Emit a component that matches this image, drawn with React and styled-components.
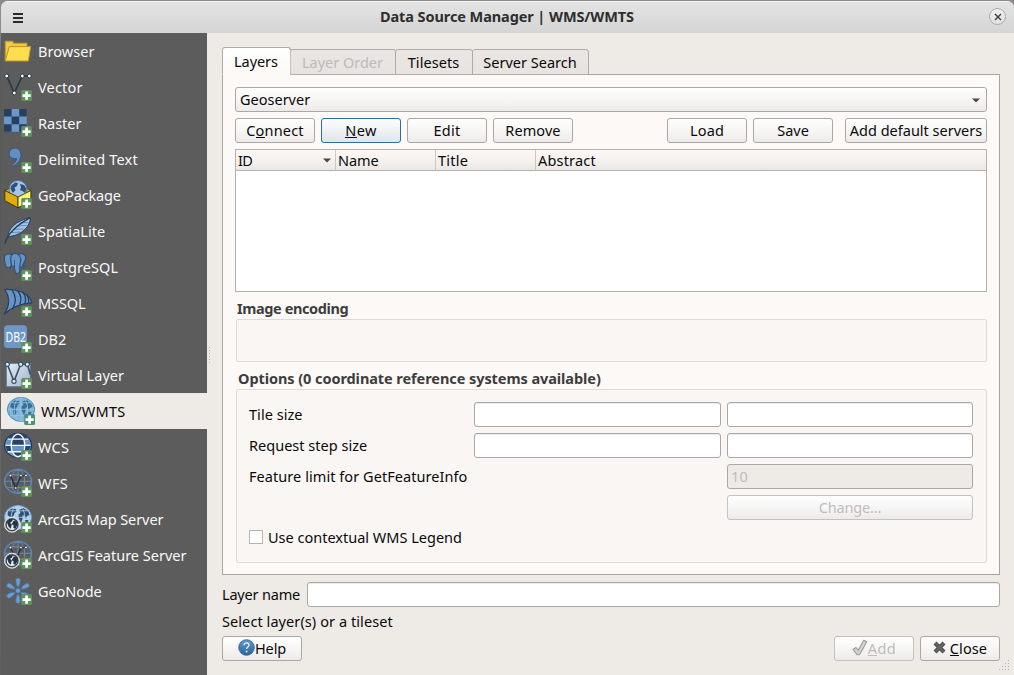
import React from 'react';
import styled, { createGlobalStyle, css } from 'styled-components';

const GlobalStyle = createGlobalStyle`
  * { box-sizing: border-box; }
  html, body { margin: 0; padding: 0; }
  body {
    font-family: "Noto Sans", "Open Sans", sans-serif;
    font-size: 14.5px;
    line-height: 20px;
    color: #0a0a0a;
    background: #6b6b6b;
    overflow: hidden;
  }
`;

const line = '#aeaba8';

const Desktop = styled.div`
  width: 1014px;
  height: 675px;
  padding: 1px 0 0 1px;
  background: linear-gradient(#8d8b8b 0 30px, #5a5a5a 60px 82px, #55595c 240px, #666 420px, #606060 675px);
`;

const Window = styled.div`
  display: flex;
  flex-direction: column;
  height: 674px;
  border-radius: 7px 7px 0 0;
  overflow: hidden;
  background: #eeebe6;
`;

const TitleBar = styled.header`
  display: grid;
  grid-template-columns: 60px 1fr 60px;
  align-items: center;
  height: 32px;
  padding-bottom: 2px;
  flex: none;
  border-top: 1px solid #f4f4f4;
  background: linear-gradient(#e3e3e3, #d5d5d5);
`;

const MenuIcon = styled.svg`
  margin: 2px 0 0 12px;
  width: 10px;
  height: 10px;
`;

const WindowTitle = styled.h1`
  margin: 0 1px 2px 0;
  text-align: center;
  font-size: 14.5px;
  font-weight: 700;
  letter-spacing: -0.09px;
  color: #2e2e2e;
`;

const WindowClose = styled.button`
  justify-self: end;
  margin-right: 8px;
  width: 17px;
  height: 17px;
  padding: 0;
  display: flex;
  align-items: center;
  justify-content: center;
  border: 1px solid #a9a9a9;
  border-radius: 50%;
  background: linear-gradient(#f0f0f0, #e2e2e2);
`;

const Body = styled.div`
  display: flex;
  flex: 1;
`;

const Sidebar = styled.nav`
  width: 206px;
  background: #5c5c5c;
`;

const SourceItem = styled.div`
  display: flex;
  align-items: center;
  gap: 6px;
  height: 36px;
  padding-left: ${(p) => (p.$active ? 6 : 3)}px;
  background: ${(p) => (p.$active ? '#eeebe6' : 'transparent')};
  color: ${(p) => (p.$active ? '#0a0a0a' : '#f8f8f8')};
`;

const SourceIcon = styled.svg`
  width: 28px;
  height: 28px;
  flex: none;
  overflow: visible;
`;

const Text = styled.span`
  letter-spacing: ${(p) => p.$track || 0}px;
  white-space: nowrap;
`;

const Splitter = styled.div`
  width: 5px;
  display: flex;
  justify-content: center;
  padding-top: 314px;
`;

const Main = styled.main`
  flex: 1;
  display: flex;
  flex-direction: column;
  padding: 14px 14px 0 10px;
`;

const TabBar = styled.div`
  display: flex;
  align-items: flex-end;
  height: 28px;
  margin-bottom: -1px;
  z-index: 1;
`;

const Tab = styled.div`
  display: flex;
  justify-content: center;
  align-items: center;
  width: ${(p) => p.$w}px;
  height: 26px;
  margin-left: -1px;
  padding-right: 1px;
  border: 1px solid ${line};
  border-radius: 3px 3px 0 0;
  background: linear-gradient(#e9e6e3, #e6e3e0);
  color: ${(p) => (p.$disabled ? '#bdbbb9' : '#0a0a0a')};
  ${(p) => p.$disabled && css`border-left-color: #c4c1be; border-right-color: #c4c1be;`}
  ${(p) => p.$active && css`
    height: 28px;
    margin-left: 0;
    border-bottom-color: #fdf9f6;
    background: linear-gradient(#ffffff, #fdf9f6);
  `}
`;

const Panel = styled.section`
  display: flex;
  flex-direction: column;
  height: 501px;
  padding: 12px 12px 0;
  border: 1px solid #a7a4a1;
  background: #fdf9f6;
`;

const controlFace = css`
  border: 1px solid #aaa7a4;
  border-radius: 3px;
  background: linear-gradient(#fefefe, #f7f6f5 50%, #ecebe9);
`;

const Combo = styled.div`
  ${controlFace}
  display: flex;
  align-items: center;
  justify-content: space-between;
  height: 25px;
  padding: 0 6px 2px 4px;

  svg { margin-top: 3px; }
`;

const ButtonRow = styled.div`
  display: flex;
  gap: 6px;
  margin-top: 6px;
`;

const Spacer = styled.div`
  flex: 1;
  margin-right: ${(p) => -(p.$pull || 0)}px;
`;

const Button = styled.button`
  ${controlFace}
  display: flex;
  align-items: center;
  justify-content: center;
  width: ${(p) => p.$w || 80}px;
  height: 25px;
  margin-left: ${(p) => p.$ml || 0}px;
  padding: 0 0 2px;
  font: inherit;
  color: ${(p) => (p.disabled ? '#bebcba' : '#0a0a0a')};
  ${(p) => p.disabled && css`border-color: #c4c1bf;`}
  ${(p) => p.$focus && css`
    border-color: #2e6e97;
    background: linear-gradient(#fbfcfd, #eff2f4 50%, #dfe5e9);
  `}
`;

const Mnemonic = styled.span`
  display: inline-block;
  height: 18px;
  border-bottom: 1px solid currentColor;
  line-height: 20px;
  vertical-align: top;
`;

const LayerTable = styled.div`
  height: 143px;
  margin-top: 6px;
  border: 1px solid #b3b0ad;
  background: #fff;
`;

const HeaderRow = styled.div`
  display: grid;
  grid-template-columns: 100px 100px 100px 1fr;
  height: 21px;
  border-bottom: 1px solid #b3b0ad;
  background: linear-gradient(#fbf7f4, #f5f2ef 50%, #eae7e4);
`;

const HeaderCell = styled.div`
  display: flex;
  align-items: center;
  justify-content: space-between;
  padding: 0 4px 0 2px;
  border-right: ${(p) => (p.$last ? 'none' : '1px solid #cac7c4')};
`;

const GroupTitle = styled.h2`
  margin: 6px 0 1px ${(p) => p.$ml}px;
  height: 20px;
  font-size: 14.5px;
  font-weight: 700;
  line-height: 20px;
  letter-spacing: ${(p) => p.$track}px;
  color: #3d3d3d;
  white-space: nowrap;
`;

const Group = styled.div`
  height: ${(p) => p.$h}px;
  margin-left: 1px;
  border: 1px solid #dedad7;
  border-radius: 2px;
  background: #faf6f3;
`;

const OptionsGrid = styled.div`
  display: grid;
  grid-template-columns: 219px 247px 246px;
  column-gap: 6px;
  row-gap: 6px;
  grid-auto-rows: 25px;
  align-items: center;
  padding: 12px 0 0 12px;

  > ${Text} { margin-bottom: 2px; }
`;

const Field = styled.div`
  display: flex;
  align-items: center;
  height: 25px;
  flex: ${(p) => (p.$grow ? 1 : 'none')};
  grid-column: ${(p) => p.$col || 'auto'};
  padding: 0 0 2px 3px;
  border: 1px solid #aaa7a4;
  border-radius: 3px;
  box-shadow: inset 0 1px 0 #ececeb;
  background: ${(p) => (p.$disabled ? '#eeebe6' : '#fff')};
  color: #bebcba;
`;

const ChangeCell = styled.div`
  grid-column: 3;
`;

const CheckRow = styled.div`
  display: flex;
  align-items: center;
  gap: 5px;
  height: 20px;
  margin: 7px 0 0 12px;
`;

const CheckBox = styled.div`
  width: 14px;
  height: 14px;
  border: 1px solid #b7b4b1;
  background: #fff;
`;

const NameRow = styled.div`
  display: flex;
  align-items: center;
  gap: 7px;
  margin-top: 7px;
`;

const NameLabel = styled.div`
  width: 78px;
  padding-bottom: 2px;
`;

const Status = styled.div`
  height: 20px;
  margin-top: 4px;
`;

const Footer = styled.footer`
  display: flex;
  gap: 6px;
  margin-top: 5px;
`;

const SizeGrip = styled.svg`
  position: absolute;
  left: 999px;
  top: 660px;
  width: 11px;
  height: 11px;
`;

const Arrow = () => (
  <svg width="8" height="5" viewBox="0 0 8 5"><path d="M0 0.5h8L4 4.5z" fill="#484644" /></svg>
);

const Plus = ({ tint = '#5b935b' }) => (
  <g>
    <rect x="17.2" y="17" width="10.8" height="11" rx="1.6" fill={tint} />
    <path d="M22.6 18.500v8.200M18.500 22.600h8.200" stroke="#fff" strokeWidth="2.700" />
  </g>
);

const LAND = 'M4 6L8 3.5 12 4 12.5 6.5 10.5 8 10 10 8.5 12 9.5 15 8 19 6.5 17 6 12 3.5 10zM15 5L19 3 24 6 25.5 10 23 11 22 14 20.5 11 18.5 10 18.5 14 17 18 15.5 15 14 12 14.5 9.5 16.5 8zM21 15L24.5 15 23.5 18 21.5 17z';

const Graticule = ({ color, width = 1 }) => (
  <g fill="none" stroke={color} strokeWidth={width}>
    <path d="M14 .8V24M1 12.3h26M3.5 5.8h21M3.5 18.6h21" />
    <ellipse cx="14" cy="12.4" rx="6.8" ry="11.6" />
  </g>
);

const MiniGlobe = () => (
  <g>
    <circle cx="8" cy="19.700" r="7.500" fill="#aeb2b6" stroke="#e6e6e6" strokeWidth="1" />
    <circle cx="8" cy="19.700" r="5.900" fill="#e9ebed" stroke="#34434f" strokeWidth="1.200" />
    <path d="M2.800 17l3-3.200 3.200.3-1 2.400-2 1.200 1.800 1.800-1 4.200-2.200-2zM9.800 15.500l3 .5.900 3.700-2.500 4.300-1.900-1.200.3-2.600-2-1z" fill="#243546" />
  </g>
);

const NodeLine = ({ stroke = '#26384b' }) => (
  <g>
    <path d="M2.700 3L10.300 20 18.300 3h7" fill="none" stroke={stroke} strokeWidth="1.700" />
    {[[2.7, 3], [10.3, 20], [18.3, 3], [25.3, 3]].map(([cx, cy]) => (
      <circle key={cx} cx={cx} cy={cy} r="1.900" fill="#fff" stroke={stroke} strokeWidth="1" />
    ))}
  </g>
);

const SmallNodes = () => (
  <g>
    <path d="M6.500 6.500L11.800 19 17 6.500h5" fill="none" stroke="#26303b" strokeWidth="1.500" />
    {[[6.5, 6.5], [11.8, 19], [17, 6.5], [22, 6.5]].map(([cx, cy]) => (
      <circle key={cx} cx={cx} cy={cy} r="1.300" fill="#fff" stroke="#26303b" strokeWidth=".7" />
    ))}
  </g>
);

const icons = {
  folder: (
    <g stroke="#b8962a" strokeWidth="1" strokeLinejoin="round">
      <path d="M1.2 24V4.200h7.600l.6 2H23v4" fill="#f3cb3f" />
      <path d="M5.300 9.600h21.400L24.400 24H1.200z" fill="#ffdc50" />
    </g>
  ),
  vector: <><NodeLine /><Plus /></>,
  raster: (
    <>
      <rect width="22.800" height="22.800" fill="#6d97c8" />
      <path d="M0 0h7.6v7.6H0zM15.2 0h7.6v7.6h-7.6zM7.6 7.6h7.6v7.6H7.6zM0 15.2h7.6v7.6H0zM15.2 15.2h7.6v7.6h-7.6z" fill="#26405f" />
      <Plus />
    </>
  ),
  comma: (
    <>
      <path d="M10 3.200C13.200 2.500 17 5 17 10c0 5-3.500 9.500-8.700 11.500l-.6-1.200c3.200-2.200 4.900-4.700 4.700-7-2 1-7.300.2-7.300-4.900C5.100 5.500 7.500 3.500 10 3.200z" fill="#5f8fc4" stroke="#33567f" strokeWidth="1" />
      <Plus />
    </>
  ),
  geopackage: (
    <>
      <path d="M.8 9.500L14 3.500l12.900 5.800L14 17z" fill="#e0b51c" stroke="#3a2f08" strokeWidth=".8" />
      <circle cx="14" cy="8.500" r="9" fill="#a7c4e4" stroke="#4b74a3" />
      <path d="M7 5l4-3.500 3 .5-1 3-2.500 1.500 1 2.500-2.500 3L6.500 8zM16 3l4 1 2.500 4-1.500 4-2.500-2-2.500-1 1-2.500z" fill="#2f4f78" />
      <path d="M.8 9.500L14 16v10.800L.8 19.700z" fill="#e0ae0c" stroke="#3a2f08" strokeWidth=".9" strokeLinejoin="round" />
      <path d="M14 16l12.900-6.500v10.200L14 26.800z" fill="#fdf870" stroke="#3a2f08" strokeWidth=".9" strokeLinejoin="round" />
      <Plus />
    </>
  ),
  feather: (
    <>
      <path d="M3.500 21C4 12 11 4 26.500.500 26 9 19 17.500 6 19.500z" fill="#a5c5e6" stroke="#27405f" strokeWidth="1" />
      <path d="M7 15.500l9-.5M9 12.500l10.500-.5M12 9l10.500-.5M15.500 6l9-.5" stroke="#5c87b7" strokeWidth="1" />
      <path d="M.8 26.500C3 19 9 10 26.300.6" fill="none" stroke="#27405f" strokeWidth="1.500" />
      <Plus />
    </>
  ),
  elephant: (
    <>
      <path d="M4 1C.5 1-.2 4 .7 8.500c.7 3.500 2 6.500 3.700 6.300 1.200-.1 2-1.300 3-1.800l3 .3c.2 3 .2 7.200 2.700 7.400 2.800.2 2.700-3 2.800-6.700 3.300.5 4.600-.4 5-1.200-2 .2-2.700-.3-2.200-1C21 8.500 22.500 4 20.500 2 18.500.3 15.500.6 14 1.300 12.500.5 9.500.5 8 1.500 7 1.100 5.500.9 4 1z" fill="#6794c7" stroke="#2f5077" strokeWidth="1.100" />
      <path d="M8 1.500C6.300 3.500 6.500 8 7.500 13M14 1.300c2.500 1.700 3.500 5 2.300 8.700-.5 1.500-.4 2.500-.2 4" fill="none" stroke="#2f5077" strokeWidth="1.200" />
      <path d="M10.500 7v6.300" stroke="#2f5077" strokeWidth=".8" />
      <Plus />
    </>
  ),
  mssql: (
    <>
      <path d="M.8.500C10 .2 25.500 2.500 27.600 13.800 17 14.500 8 18 .3 25 5.500 17 6 8 .8.500z" fill="#6794c7" stroke="#27405f" strokeWidth="1.200" strokeLinejoin="round" />
      <path d="M8 .8c4.300 6 4 12.500 1 18M13.500 1.500c4 5 4 10 2.200 14.300M18.500 3c3.200 3.500 3.700 7.500 2.500 11.200M22.500 5.500c2 2.500 2.500 5.500 2 8.500" fill="none" stroke="#27405f" strokeWidth="1.300" />
      <Plus />
    </>
  ),
  db2: (
    <>
      <rect y=".3" width="23" height="22.700" rx="3.500" fill="#6d97c8" />
      <text x="1.500" y="16.600" fontSize="13.500" fontFamily="Noto Sans, sans-serif" fill="#fff" textLength="20.600" lengthAdjust="spacingAndGlyphs">DB2</text>
      <Plus />
    </>
  ),
  virtual: (
    <>
      <defs>
        <linearGradient id="sheet" x1="0" y1="0" x2="1" y2="1">
          <stop offset="0" stopColor="#e6edf5" /><stop offset="1" stopColor="#9fb4cb" />
        </linearGradient>
      </defs>
      <rect x="2.300" y="2.300" width="24" height="23.500" fill="url(#sheet)" stroke="#5b7391" />
      <path d="M3.300 3.300L10 20.300 16.700 3.300h6.600l3 10" fill="none" stroke="#3a5068" strokeWidth="1.600" />
      {[[3.3, 3.3], [10, 20.3], [16.7, 3.3], [23.3, 3.3]].map(([cx, cy]) => (
        <circle key={cx} cx={cx} cy={cy} r="2.100" fill="#e6edf5" stroke="#3a5068" strokeWidth="1.200" />
      ))}
      <Plus />
    </>
  ),
  wms: (
    <>
      <ellipse cx="14" cy="12.400" rx="13.600" ry="12" fill="#80b4da" stroke="#4f8ab5" />
      <path d={LAND} fill="#2e648d" opacity=".9" />
      <Graticule color="#9cc8e4" width={0.8} />
      <Plus tint="#4c8f7d" />
    </>
  ),
  wcs: (
    <>
      <ellipse cx="14" cy="12.400" rx="13.500" ry="12" fill="#6794c7" stroke="#1f3856" strokeWidth="1.200" />
      <path d="M3.500 6C6 2.500 10 .8 14 .8S22 2.500 24.500 6zM7.500 6h13v6.300h-13zM1 12.300h6.500l1 6.300h-5zM20.500 12.300H27l-2.500 6.300h-5zM8.500 18.600h11L17 24h-6z" fill="#25446b" />
      <g fill="none" stroke="#f4f7fa" strokeWidth="1.400">
        <path d="M1.500 12.400h25M3.700 6.100h20.600M3.700 18.700h20.600" />
        <ellipse cx="14" cy="12.400" rx="6.800" ry="11.300" />
      </g>
      <Plus />
    </>
  ),
  wfs: (
    <>
      <ellipse cx="14" cy="12.400" rx="13.400" ry="11.800" fill="none" stroke="#5786bb" strokeWidth="1.500" />
      <Graticule color="#6f8fb3" width={0.9} />
      <SmallNodes />
      <Plus />
    </>
  ),
  arcmap: (
    <>
      <ellipse cx="14" cy="12.400" rx="13.600" ry="12" fill="#b5cfe9" stroke="#6794c7" />
      <path d={LAND} fill="#2f5077" />
      <Graticule color="#b5cfe9" width={0.8} />
      <MiniGlobe />
      <Plus />
    </>
  ),
  arcfeature: (
    <>
      <ellipse cx="14" cy="12.400" rx="13.400" ry="11.800" fill="none" stroke="#5786bb" strokeWidth="1.500" />
      <Graticule color="#6f8fb3" width={0.9} />
      <SmallNodes />
      <MiniGlobe />
      <Plus />
    </>
  ),
  geonode: (
    <>
      {[0, 60, 120, 180, 240, 300].map((a) => (
        <path key={a} transform={`rotate(${a} 14 13.700)`} d="M14 10.300C12.600 8.500 11.700 5 11.900 2.800c.2-2.200 4-2.200 4.200 0C16.300 5 15.400 8.500 14 10.300z" fill="#6d9dd1" stroke="#4a7db5" strokeWidth=".8" />
      ))}
      <circle cx="14" cy="13.700" r="2.300" fill="#6d9dd1" stroke="#4a7db5" strokeWidth=".6" />
      <Plus />
    </>
  ),
};

const sources = [
  ['Browser', 'folder', 0.06],
  ['Vector', 'vector', 0.19],
  ['Raster', 'raster', 0],
  ['Delimited Text', 'comma', 0.17],
  ['GeoPackage', 'geopackage', -0.15],
  ['SpatiaLite', 'feather', 0.03],
  ['PostgreSQL', 'elephant', 0.08],
  ['MSSQL', 'mssql', -0.1],
  ['DB2', 'db2', 0],
  ['Virtual Layer', 'virtual', 0.04],
  ['WMS/WMTS', 'wms', 0.22],
  ['WCS', 'wcs', 0.25],
  ['WFS', 'wfs', 0.4],
  ['ArcGIS Map Server', 'arcmap', -0.08],
  ['ArcGIS Feature Server', 'arcfeature', 0],
  ['GeoNode', 'geonode', -0.1],
];

const HelpIcon = () => (
  <svg width="17" height="17" viewBox="0 0 17 17">
    <defs>
      <linearGradient id="help" x1="0" y1="0" x2="0" y2="1">
        <stop offset="0" stopColor="#5e9bd0" /><stop offset="1" stopColor="#2b649a" />
      </linearGradient>
    </defs>
    <circle cx="8.500" cy="8.500" r="7.800" fill="url(#help)" stroke="#2a5d8f" strokeWidth=".8" />
    <path d="M6 6.300C6 4.600 7.200 3.900 8.500 3.900s2.500.8 2.500 2.200c0 1.900-2.400 1.900-2.400 4" fill="none" stroke="#e8f1f9" strokeWidth="1.300" />
    <circle cx="8.600" cy="12.500" r=".9" fill="#e8f1f9" />
  </svg>
);

const CheckIcon = () => (
  <svg width="16" height="17" viewBox="0 0 16 17">
    <path d="M1 10.500l3-2 2.200 2.800L11.800 1.200l3 1.600L7.500 15.800H5.300z" fill="#d4d2d0" stroke="#9c9a98" strokeWidth="1.100" strokeLinejoin="round" />
  </svg>
);

const CrossIcon = () => (
  <svg width="13" height="13" viewBox="0 0 13 13">
    <path d="M2 2l9 9M11 2l-9 9" stroke="#4e4e4c" strokeWidth="4.200" />
    <path d="M2.500 2.500l8 8M10.500 2.500l-8 8" stroke="#6e6e6c" strokeWidth="1.500" />
  </svg>
);

export default function App() {
  return (
    <Desktop>
      <GlobalStyle />
      <Window>
        <TitleBar>
          <MenuIcon viewBox="0 0 10 10"><path d="M0 1h10M0 5h10M0 9h10" stroke="#2b2b2b" strokeWidth="2" /></MenuIcon>
          <WindowTitle>Data Source Manager | WMS/WMTS</WindowTitle>
          <WindowClose aria-label="Close window">
            <svg width="8" height="8" viewBox="0 0 8 8"><path d="M1 1l6 6M7 1L1 7" stroke="#454545" strokeWidth="1.500" /></svg>
          </WindowClose>
        </TitleBar>
        <Body>
          <Sidebar>
            {sources.map(([name, icon, track]) => (
              <SourceItem key={name} $active={name === 'WMS/WMTS'}>
                <SourceIcon viewBox="0 0 28 28">{icons[icon]}</SourceIcon>
                <Text $track={track}>{name}</Text>
              </SourceItem>
            ))}
          </Sidebar>
          <Splitter>
            <svg width="3" height="17" viewBox="0 0 3 17">
              <path d="M1 0v17" stroke="#b5b2ae" strokeWidth="1" strokeDasharray="1 2" transform="translate(.5 0)" />
            </svg>
          </Splitter>
          <Main>
            <TabBar>
              <Tab $active $w={69}><Text $track={-0.06}>Layers</Text></Tab>
              <Tab $w={106} $disabled><Text $track={-0.02}>Layer Order</Text></Tab>
              <Tab $w={78}><Text $track={0.06}>Tilesets</Text></Tab>
              <Tab $w={117}><Text>Server Search</Text></Tab>
            </TabBar>
            <Panel>
              <Combo><Text>Geoserver</Text><Arrow /></Combo>
              <ButtonRow>
                <Button><Text $track={0.17}>C<Mnemonic>o</Mnemonic>nnect</Text></Button>
                <Button $focus><Text $track={0.4}><Mnemonic>N</Mnemonic>ew</Text></Button>
                <Button><Text $track={0.3}>Edit</Text></Button>
                <Button><Text $track={0.08}>Remove</Text></Button>
                <Spacer $pull={6} />
                <Button><Text $track={0.1}>Load</Text></Button>
                <Button><Text>Save</Text></Button>
                <Button $w={142} $ml={6}><Text>Add default servers</Text></Button>
              </ButtonRow>
              <LayerTable>
                <HeaderRow>
                  <HeaderCell><Text $track={-0.6}>ID</Text><Arrow /></HeaderCell>
                  <HeaderCell><Text $track={-0.07}>Name</Text></HeaderCell>
                  <HeaderCell><Text $track={0.25}>Title</Text></HeaderCell>
                  <HeaderCell $last><Text $track={0.18}>Abstract</Text></HeaderCell>
                </HeaderRow>
              </LayerTable>
              <GroupTitle $ml={2} $track={-0.39}>Image encoding</GroupTitle>
              <Group $h={43} />
              <GroupTitle $ml={3} $track={-0.07}>Options (0 coordinate reference systems available)</GroupTitle>
              <Group $h={174}>
                <OptionsGrid>
                  <Text $track={0.04}>Tile size</Text><Field /><Field />
                  <Text $track={0.02}>Request step size</Text><Field /><Field />
                  <Text $track={0.06}>Feature limit for GetFeatureInfo</Text>
                  <Field $col={3} $disabled><Text $track={0.1}>10</Text></Field>
                  <ChangeCell><Button disabled $w={246}><Text $track={-0.14}>Change...</Text></Button></ChangeCell>
                </OptionsGrid>
                <CheckRow><CheckBox /><Text>Use contextual WMS Legend</Text></CheckRow>
              </Group>
            </Panel>
            <NameRow><NameLabel><Text $track={-0.18}>Layer name</Text></NameLabel><Field $grow /></NameRow>
            <Status><Text $track={0.08}>Select layer(s) or a tileset</Text></Status>
            <Footer>
              <Button><HelpIcon /><Text $track={-0.1}>Help</Text></Button>
              <Spacer />
              <Button disabled><CheckIcon /><Text $track={0.5}><Mnemonic>A</Mnemonic>dd</Text></Button>
              <Button><CrossIcon /><Text $track={0.09}>&nbsp;<Mnemonic>C</Mnemonic>lose</Text></Button>
            </Footer>
          </Main>
        </Body>
      </Window>
      <SizeGrip viewBox="0 0 11 11">
        <path d="M9 0h1v1H9zM6 3h1v1H6zM9 3h1v1H9zM3 6h1v1H3zM6 6h1v1H6zM9 6h1v1H9zM0 9h1v1H0zM3 9h1v1H3zM6 9h1v1H6zM9 9h1v1H9z" fill="#b5b2ae" />
      </SizeGrip>
    </Desktop>
  );
}
